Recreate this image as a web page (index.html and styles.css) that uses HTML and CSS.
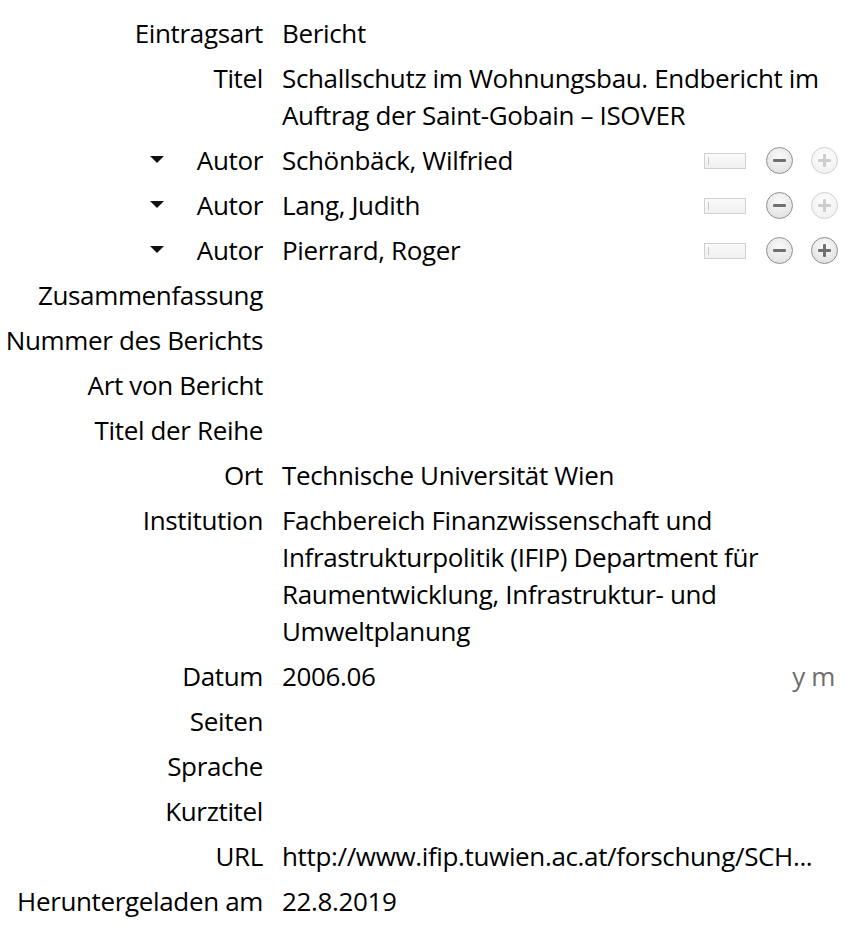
FILE: index.html
```html
<!DOCTYPE html>
<html lang="de">
<head>
  <meta charset="UTF-8" />
  <title>Eintrag</title>
  <link rel="stylesheet" href="styles.css">
</head>
<body>
  <div class="item-box">
    <div class="label">Eintragsart</div>
    <div class="value">Bericht</div>

    <div class="label">Titel</div>
    <div class="value">Schallschutz im Wohnungsbau. Endbericht im Auftrag der Saint-Gobain – ISOVER</div>

    <div class="label creator"><span class="twisty"></span>Autor</div>
    <div class="value creator-row">
      <span class="name">Schönbäck, Wilfried</span>
      <span class="switch"></span>
      <span class="btn minus"></span>
      <span class="btn plus disabled"></span>
    </div>

    <div class="label creator"><span class="twisty"></span>Autor</div>
    <div class="value creator-row">
      <span class="name">Lang, Judith</span>
      <span class="switch"></span>
      <span class="btn minus"></span>
      <span class="btn plus disabled"></span>
    </div>

    <div class="label creator"><span class="twisty"></span>Autor</div>
    <div class="value creator-row">
      <span class="name">Pierrard, Roger</span>
      <span class="switch"></span>
      <span class="btn minus"></span>
      <span class="btn plus"></span>
    </div>

    <div class="label">Zusammenfassung</div>
    <div class="value"></div>

    <div class="label">Nummer des Berichts</div>
    <div class="value"></div>

    <div class="label">Art von Bericht</div>
    <div class="value"></div>

    <div class="label">Titel der Reihe</div>
    <div class="value"></div>

    <div class="label">Ort</div>
    <div class="value">Technische Universität Wien</div>

    <div class="label">Institution</div>
    <div class="value">Fachbereich Finanzwissenschaft und Infrastrukturpolitik (IFIP) Department für Raumentwicklung, Infrastruktur- und Umweltplanung</div>

    <div class="label">Datum</div>
    <div class="value date-row"><span>2006.06</span><span class="ymd">y m</span></div>

    <div class="label">Seiten</div>
    <div class="value"></div>

    <div class="label">Sprache</div>
    <div class="value"></div>

    <div class="label">Kurztitel</div>
    <div class="value"></div>

    <div class="label">URL</div>
    <div class="value">http://www.ifip.tuwien.ac.at/forschung/SCH...</div>

    <div class="label">Heruntergeladen am</div>
    <div class="value">22.8.2019</div>
  </div>
</body>
</html>
```

FILE: styles.css
```css
body {
  margin: 0;
  background: #fff;
  font-family: "Open Sans", "Noto Sans", sans-serif;
  font-size: 26px;
  letter-spacing: -0.35px;
  color: #000;
}
.item-box {
  display: grid;
  grid-template-columns: 263px 1fr;
  column-gap: 19px;
  padding: 11px 12px 8px 0;
}
.label, .value {
  line-height: 37px;
  padding: 4px 0;
  min-height: 37px;
}
.label {
  text-align: right;
  white-space: nowrap;
}
.creator {
  display: flex;
  justify-content: flex-end;
  align-items: center;
}
.twisty {
  width: 0;
  height: 0;
  border-left: 7px solid transparent;
  border-right: 7px solid transparent;
  border-top: 7px solid #111;
  margin-right: 33px;
  margin-top: -2px;
}
.creator-row {
  display: flex;
  align-items: center;
}
.creator-row .name {
  flex: 1;
}
.switch {
  width: 40px;
  height: 14px;
  border: 1px solid #d0d0d0;
  background: linear-gradient(#fafafa, #f0f0f0);
  position: relative;
  margin-right: 20px;
}
.switch::before {
  content: "";
  position: absolute;
  left: 3px;
  top: 3px;
  width: 1px;
  height: 8px;
  background: #c8c8c8;
}
.btn {
  width: 27px;
  height: 27px;
  border-radius: 50%;
  border: 1px solid #8e8e8e;
  background: radial-gradient(circle at 50% 35%, #fafafa, #dcdcdc);
  position: relative;
  box-sizing: border-box;
}
.btn::before, .plus::after {
  content: "";
  position: absolute;
  left: 6px;
  top: 11px;
  width: 13px;
  height: 3px;
  border-radius: 1px;
  background: #707070;
}
.plus {
  margin-left: 18px;
  margin-right: -3px;
}
.plus::after {
  left: 11px;
  top: 6px;
  width: 3px;
  height: 13px;
}
.disabled {
  border-color: #cfcfcf;
  background: radial-gradient(circle at 50% 35%, #fdfdfd, #efefef);
}
.disabled::before, .disabled::after {
  background: #cdcdcd;
}
.date-row {
  display: flex;
  justify-content: space-between;
}
.ymd {
  color: #6e6e6e;
}
```
